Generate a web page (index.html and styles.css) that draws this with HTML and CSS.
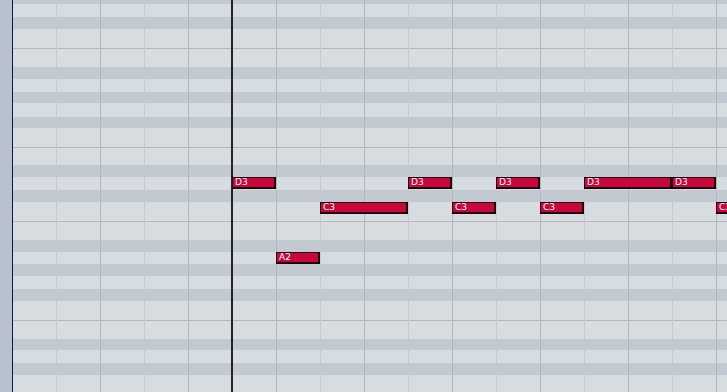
FILE: index.html
```html
<!DOCTYPE html>
<html lang="en">
<head>
    <meta charset="UTF-8">
    <meta name="viewport" content="width=device-width, initial-scale=1.0">
    <title>Key Editor</title>
    <link rel="stylesheet" href="styles.css">
</head>
<body>
    <div class="editor">
        <div class="strip"></div>
        <div class="grid" id="grid">
            <div class="rows" id="rows"></div>
            <div class="beats"></div>
            <div class="playhead"></div>
            <div class="notes" id="notes"></div>
        </div>
    </div>
    <script>
        // pitch rows top to bottom, heights follow the keyboard on the left
        const rows = [
          ["D#4", 4, "black"], ["D4", 13, "white"], ["C#4", 12, "black"], ["C4", 19, "white"],
          ["B3", 19, "white split"], ["A#3", 12, "black"], ["A3", 13, "white"], ["G#3", 11, "black"],
          ["G3", 14, "white"], ["F#3", 11, "black"], ["F3", 19, "white"], ["E3", 18, "white split"],
          ["D#3", 12, "black"], ["D3", 13, "white"], ["C#3", 12, "black"], ["C3", 19, "white"],
          ["B2", 19, "white split"], ["A#2", 12, "black"], ["A2", 12, "white"], ["G#2", 12, "black"],
          ["G2", 13, "white"], ["F#2", 12, "black"], ["F2", 19, "white"], ["E2", 19, "white split"],
          ["D#2", 11, "black"], ["D2", 13, "white"], ["C#2", 12, "black"], ["C2", 17, "white"]
        ];

        const notes = [
          ["D3", 0, 1], ["A2", 1, 1], ["C3", 2, 2], ["D3", 4, 1], ["C3", 5, 1],
          ["D3", 6, 1], ["C3", 7, 1], ["D3", 8, 2], ["D3", 10, 1], ["C3", 11, 1]
        ];

        const beat = 44;
        const start = 219;
        const rowsEl = document.getElementById("rows");
        const notesEl = document.getElementById("notes");
        const tops = {};
        let y = 0;

        rows.forEach(([name, h, kind]) => {
          const row = document.createElement("div");
          row.className = "row " + kind;
          row.style.height = h + "px";
          rowsEl.appendChild(row);
          tops[name] = y;
          y += h;
        });

        notes.forEach(([name, pos, len]) => {
          const note = document.createElement("div");
          note.className = "note";
          note.textContent = name;
          note.style.left = (start + pos * beat) + "px";
          note.style.top = tops[name] + "px";
          note.style.width = (len * beat) + "px";
          notesEl.appendChild(note);
        });
    </script>
</body>
</html>
```

FILE: styles.css
```css
:root {
    --row-white: #d7dce0;
    --row-black: #c2c9d1;
    --strip: #b8c2cf;
    --beat-line: #c5c9cd;
    --bar-line: #b3b7bc;
    --split-line: #b4b8bd;
    --note: #c8063c;
}

body {
    margin: 0;
    overflow: hidden;
    font-family: 'Liberation Sans', Arial, sans-serif;
}

.editor {
    display: flex;
    height: 392px;
}

.strip {
    width: 12px;
    background: var(--strip);
    border-right: 1px solid #14144a;
}

.grid {
    flex: 1;
    position: relative;
    overflow: hidden;
}

.rows {
    display: flex;
    flex-direction: column;
}

.row {
    box-sizing: border-box;
}

.row.white {
    background: var(--row-white);
}

.row.black {
    background: var(--row-black);
}

.row.split {
    border-top: 1px solid var(--split-line);
}

.beats {
    position: absolute;
    inset: 0;
    background: repeating-linear-gradient(to right,
        transparent 0 43px,
        var(--beat-line) 43px 44px,
        transparent 44px 87px,
        var(--bar-line) 87px 88px);
}

.playhead {
    position: absolute;
    top: 0;
    bottom: 0;
    left: 218px;
    width: 2px;
    background: #232323;
}

.notes {
    position: absolute;
    inset: 0;
}

.note {
    position: absolute;
    box-sizing: border-box;
    height: 12px;
    padding-left: 2px;
    background: var(--note);
    border: 1px solid #1a0008;
    border-width: 1px 2px 2px 1px;
    color: #fff;
    font-family: 'DejaVu Sans', sans-serif;
    font-size: 9px;
    line-height: 9px;
    white-space: nowrap;
    overflow: hidden;
}
```
